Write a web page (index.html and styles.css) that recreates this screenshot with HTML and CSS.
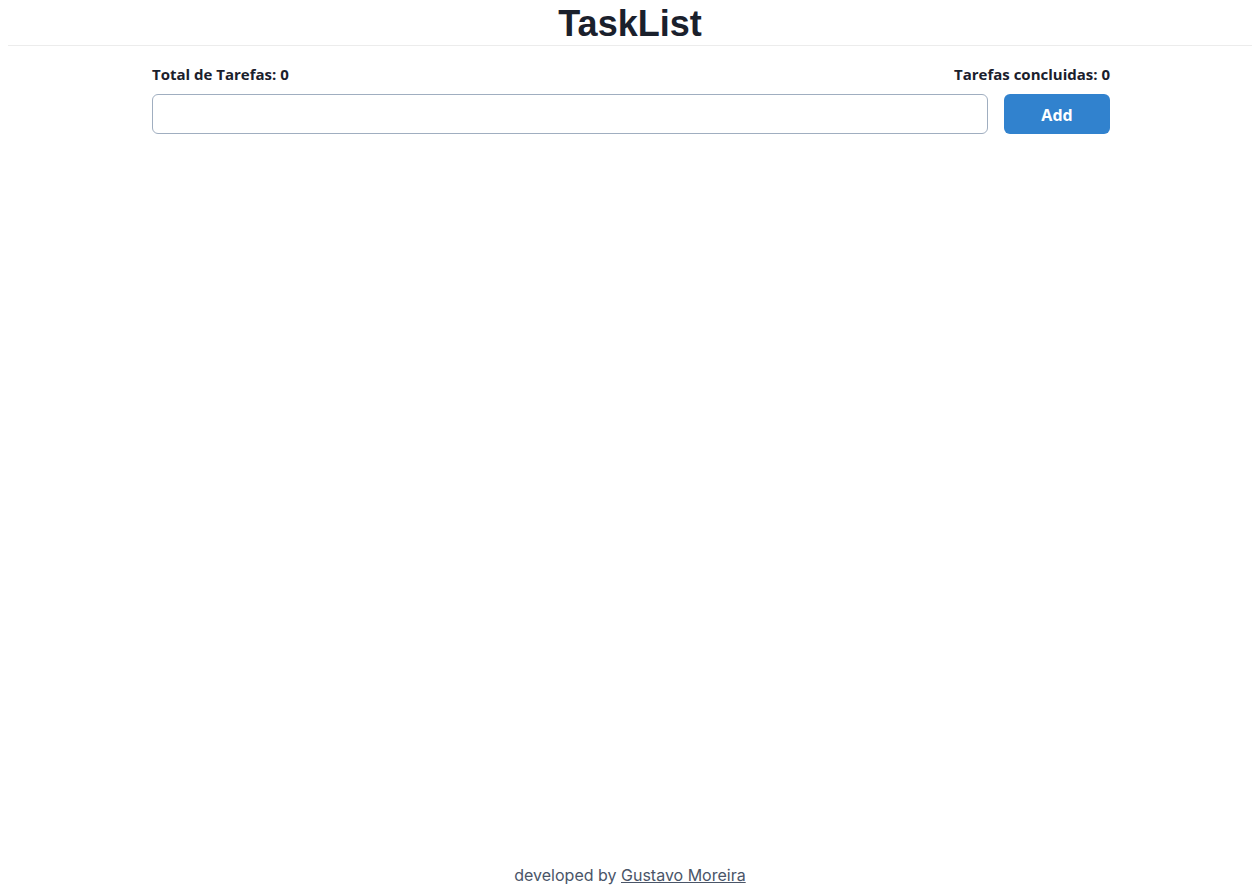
FILE: index.html
```html
<!DOCTYPE html>
<html lang="pt-BR">
<head>
<meta charset="utf-8">
<title>TaskList</title>
<link rel="stylesheet" href="styles.css">
</head>
<body>
<div class="page">
  <header class="header">
    <h1 class="title">TaskList</h1>
  </header>
  <main class="main">
    <div class="stats">
      <span class="stat">Total de Tarefas: 0</span>
      <span class="stat">Tarefas concluidas: 0</span>
    </div>
    <form class="add-form">
      <input class="task-input" type="text">
      <button class="add-btn" type="button">Add</button>
    </form>
  </main>
  <footer class="footer">
    developed by <a class="footer-link" href="#">Gustavo Moreira</a>
  </footer>
</div>
</body>
</html>
```
FILE: styles.css
```css
html, body {
  height: 100%;
}
body {
  margin: 0 8px;
  background: #fff;
  color: #1a202c;
  font-family: "Open Sans", "Noto Sans", sans-serif;
}
.page {
  min-height: 100%;
  display: flex;
  flex-direction: column;
}
.header {
  border-bottom: 1px solid #ececec;
  text-align: center;
  padding-top: 2px;
}
.title {
  margin: 0;
  font-family: "Liberation Sans", Arial, sans-serif;
  font-weight: 700;
  font-size: 36px;
  line-height: 43px;
  color: #1a202c;
}
.main {
  width: 958px;
  margin-left: calc(50% - 478px);
  padding-top: 18px;
  flex: 1;
}
.stats {
  display: flex;
  justify-content: space-between;
  font-size: 15px;
  font-weight: 700;
  line-height: 20px;
  color: #1a202c;
}
.add-form {
  display: flex;
  gap: 16px;
  margin-top: 10px;
}
.task-input {
  flex: 1;
  height: 40px;
  box-sizing: border-box;
  border: 1px solid #a0aec0;
  border-radius: 6px;
  padding: 0 16px;
  font-size: 16px;
  outline: none;
  background: #fff;
}
.add-btn {
  width: 106px;
  height: 40px;
  padding: 2px 0 0;
  border: none;
  border-radius: 6px;
  background: #3182ce;
  color: #fff;
  font-family: "Open Sans", "Noto Sans", sans-serif;
  font-weight: 700;
  font-size: 16px;
  cursor: pointer;
}
.footer {
  text-align: center;
  font-family: Inter, "Noto Sans", sans-serif;
  font-size: 16px;
  line-height: 20px;
  color: #4a5568;
  padding-bottom: 9px;
}
.footer-link {
  color: #4a5568;
  text-decoration: underline;
}
```
